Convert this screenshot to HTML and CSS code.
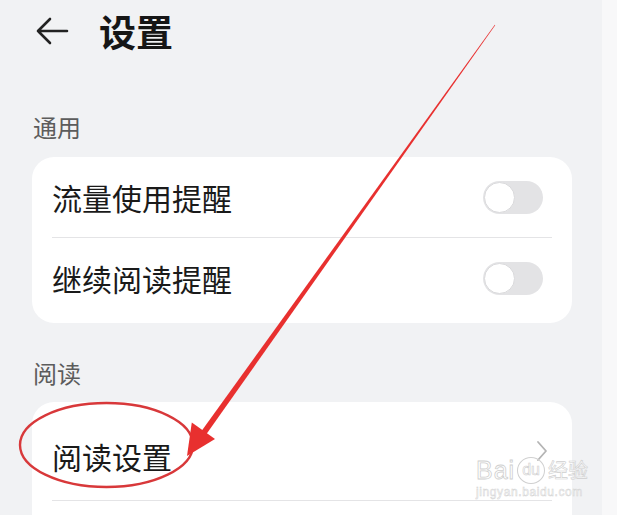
FILE: index.html
```html
<!DOCTYPE html>
<html lang="zh-CN">
<head>
<meta charset="utf-8">
<title>设置</title>
<link rel="stylesheet" href="styles.css">
</head>
<body>
<div class="screen">
  <div class="main">
    <header class="topbar">
      <svg class="back" viewBox="0 0 34 30" width="34" height="30" aria-hidden="true">
        <path d="M32 15 H3 M15 3 L3 15 L15 27" fill="none" stroke="#222" stroke-width="2.6" stroke-linecap="round" stroke-linejoin="round"/>
      </svg>
      <h1 class="title">设置</h1>
    </header>

    <div class="section-label">通用</div>
    <div class="card">
      <div class="row">
        <span class="row-text">流量使用提醒</span>
        <span class="toggle"><span class="knob"></span></span>
      </div>
      <div class="divider"></div>
      <div class="row">
        <span class="row-text">继续阅读提醒</span>
        <span class="toggle"><span class="knob"></span></span>
      </div>
    </div>

    <div class="section-label section-label-2">阅读</div>
    <div class="card card-open">
      <div class="row row-tall">
        <span class="row-text">阅读设置</span>
        <svg class="chevron" viewBox="0 0 12 22" width="12" height="22" aria-hidden="true">
          <path d="M2 2 L10 11 L2 20" fill="none" stroke="#b4b4b4" stroke-width="1.8" stroke-linecap="round" stroke-linejoin="round"/>
        </svg>
      </div>
      <div class="divider"></div>
    </div>
  </div>
  <div class="edge"></div>

  <svg class="annotation" viewBox="0 0 617 515" width="617" height="515" aria-hidden="true">
    <ellipse cx="106.5" cy="445" rx="86.5" ry="42" fill="none" stroke="#d8383a" stroke-width="2.4"/>
    <polygon points="495.2,25.2 494.8,24.8 200.1,432.9 204.9,436.3" fill="#e8302f"/>
    <polygon points="187,456 191.8,422.5 215,439" fill="#e8302f"/>
  </svg>

  <div class="watermark">
    <div class="wm-top"><span class="wm-bai">Bai</span><span class="wm-du">du</span><span class="wm-jy">经验</span></div>
    <div class="wm-url">jingyan.baidu.com</div>
  </div>
</div>
</body>
</html>
```

FILE: styles.css
```css
* { box-sizing: border-box; }

html, body {
  margin: 0;
  padding: 0;
  background: #f1f2f4;
}

body {
  font-family: "Noto Sans CJK SC", "Noto Sans", sans-serif;
  color: #1a1a1a;
}

.screen {
  position: relative;
  width: 617px;
  height: 515px;
  overflow: hidden;
  display: flex;
}

.main {
  width: 602px;
  background: #f1f2f4;
  padding: 0 30px 0 32px;
}

.edge {
  flex: 1;
  background: #f8f8f9;
}

.topbar {
  height: 61px;
  display: flex;
  align-items: center;
}

.back {
  margin-left: 3px;
  display: block;
}

.title {
  margin: 0 0 0 30px;
  font-size: 37px;
  line-height: 40px;
  font-weight: 700;
  color: #161616;
}

.section-label {
  margin-top: 54px;
  margin-left: 1px;
  font-size: 24px;
  line-height: 24px;
  color: #5c5c5c;
}

.section-label-2 {
  margin-top: 38px;
}

.card {
  margin-top: 18px;
  background: #ffffff;
  border-radius: 22px;
  padding: 0 0 5px 0;
}

.card-open {
  margin-top: 17px;
  padding-bottom: 40px;
  border-bottom-left-radius: 0;
  border-bottom-right-radius: 0;
}

.row {
  height: 80px;
  display: flex;
  align-items: center;
  justify-content: space-between;
  padding: 0 29px 0 20px;
}

.row-tall {
  height: 98px;
  padding-top: 10px;
  padding-right: 24px;
}

.row-text {
  font-size: 30px;
  line-height: 32px;
  color: #1a1a1a;
}

.divider {
  height: 1px;
  margin: 0 20px;
  background: #e4e4e6;
}

.toggle {
  width: 60px;
  height: 33px;
  border-radius: 17px;
  background: #e3e3e5;
  display: flex;
  align-items: center;
  padding: 0 1px;
}

.knob {
  width: 31px;
  height: 31px;
  border-radius: 50%;
  background: #ffffff;
  border: 1.5px solid #dadadc;
}

.chevron {
  display: block;
  margin-top: -10px;
}

.annotation {
  position: absolute;
  left: 0;
  top: 0;
  pointer-events: none;
}

.watermark {
  position: absolute;
  left: 476px;
  top: 455px;
  font-family: "Liberation Sans", "Noto Sans CJK SC", sans-serif;
  color: rgba(255, 255, 255, 0.7);
  -webkit-text-stroke: 0.8px #cfcfcf;
  pointer-events: none;
}

.wm-top {
  display: flex;
  align-items: center;
  height: 30px;
}

.wm-bai {
  font-size: 25px;
  line-height: 25px;
  letter-spacing: 1px;
}

.wm-du {
  font-size: 16px;
  line-height: 16px;
  margin: 0 3px 0 2px;
  padding: 4px 4px 5px;
  border: 1.2px solid #d0d0d0;
  border-radius: 50%;
  -webkit-text-stroke: 0.6px #cfcfcf;
}

.wm-jy {
  font-family: "Noto Sans CJK SC", sans-serif;
  font-size: 20px;
  line-height: 22px;
  -webkit-text-stroke: 0.6px #cfcfcf;
}

.wm-url {
  font-size: 12px;
  line-height: 14px;
  letter-spacing: 0.6px;
  color: rgba(255, 255, 255, 0.6);
  -webkit-text-stroke: 0.5px #d2d2d2;
}
```
